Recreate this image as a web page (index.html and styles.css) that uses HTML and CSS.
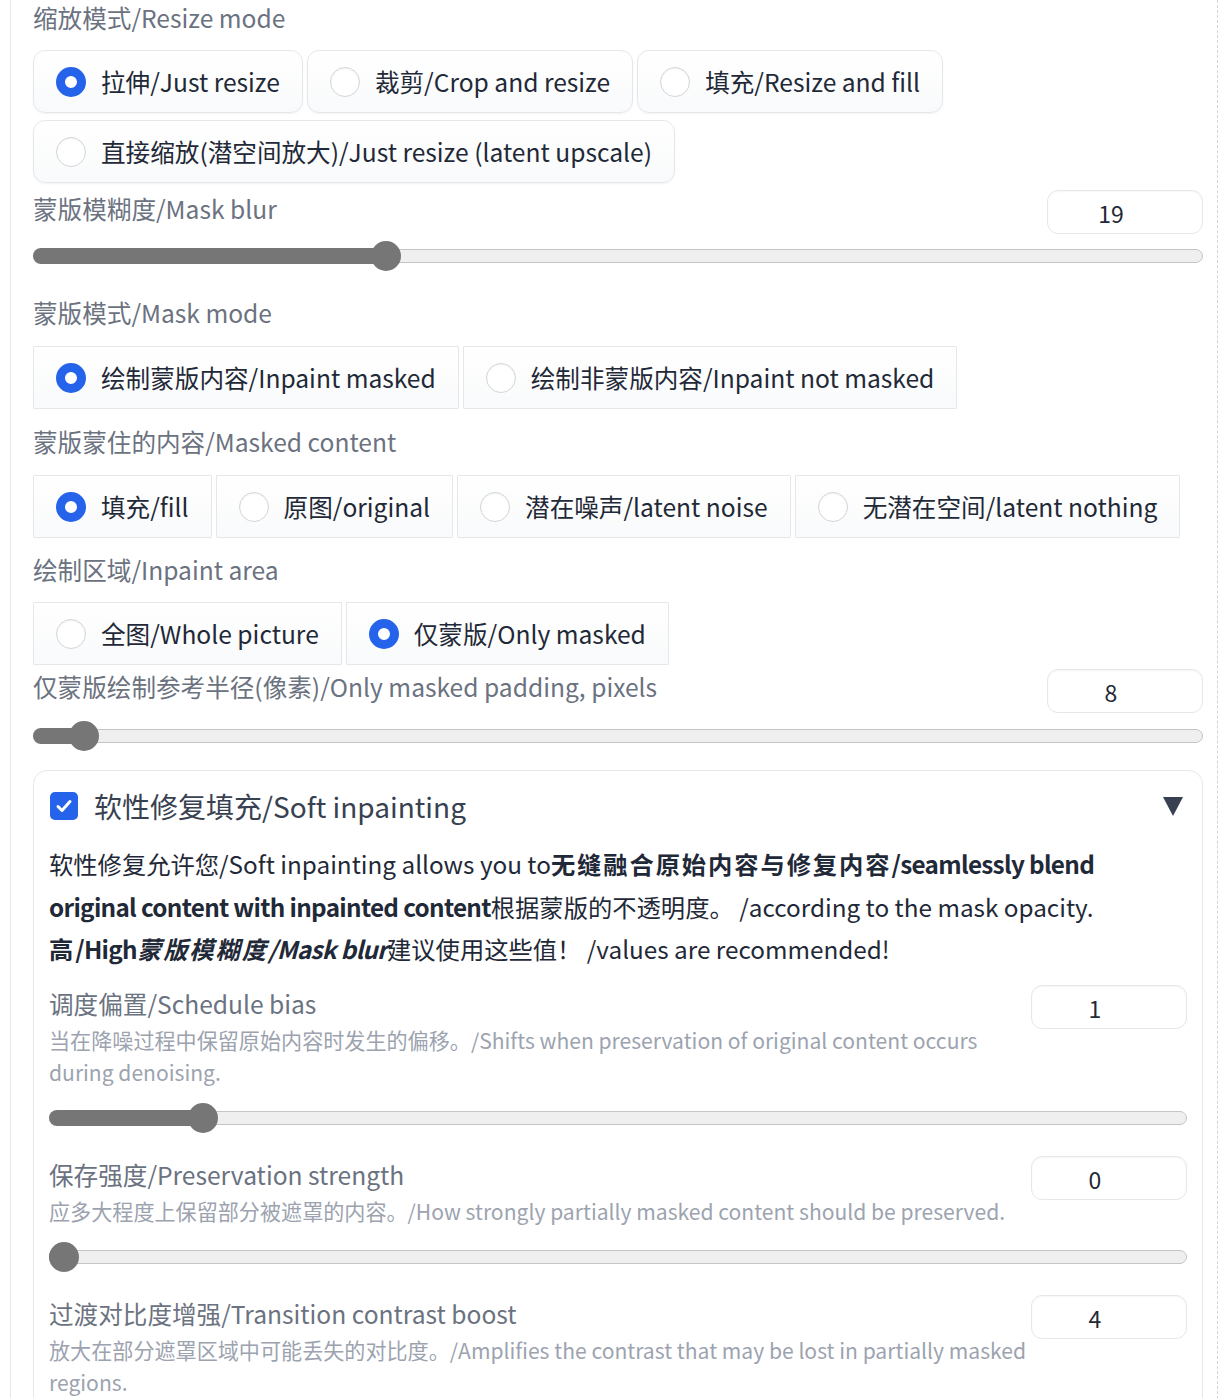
FILE: index.html
```html
<!DOCTYPE html>
<html lang="zh-CN">
<head>
<meta charset="utf-8">
<title>Inpaint settings</title>
<link rel="stylesheet" href="styles.css">
</head>
<body>
<div class="panel">

  <div class="field">
    <span class="label">缩放模式/Resize mode</span>
    <div class="radios rounded">
      <label class="radio"><span class="dot on"></span><span>拉伸/Just resize</span></label>
      <label class="radio"><span class="dot"></span><span>裁剪/Crop and resize</span></label>
      <label class="radio"><span class="dot"></span><span>填充/Resize and fill</span></label>
      <label class="radio"><span class="dot"></span><span>直接缩放(潜空间放大)/Just resize (latent upscale)</span></label>
    </div>
  </div>

  <div class="field f-blur">
    <div class="head">
      <span class="label">蒙版模糊度/Mask blur</span>
      <div class="num">19</div>
    </div>
    <div class="slider">
      <div class="track"><div class="fill" style="width: calc(15px + 0.296875 * (100% - 30px))"></div></div>
      <div class="thumb" style="left: calc(15px + 0.296875 * (100% - 30px))"></div>
    </div>
  </div>

  <div class="field f-mode">
    <span class="label">蒙版模式/Mask mode</span>
    <div class="radios square">
      <label class="radio"><span class="dot on"></span><span>绘制蒙版内容/Inpaint masked</span></label>
      <label class="radio"><span class="dot"></span><span>绘制非蒙版内容/Inpaint not masked</span></label>
    </div>
  </div>

  <div class="field f-content">
    <span class="label">蒙版蒙住的内容/Masked content</span>
    <div class="radios square">
      <label class="radio"><span class="dot on"></span><span>填充/fill</span></label>
      <label class="radio"><span class="dot"></span><span>原图/original</span></label>
      <label class="radio"><span class="dot"></span><span>潜在噪声/latent noise</span></label>
      <label class="radio"><span class="dot"></span><span>无潜在空间/latent nothing</span></label>
    </div>
  </div>

  <div class="field f-area">
    <span class="label">绘制区域/Inpaint area</span>
    <div class="radios square">
      <label class="radio"><span class="dot"></span><span>全图/Whole picture</span></label>
      <label class="radio"><span class="dot on"></span><span>仅蒙版/Only masked</span></label>
    </div>
  </div>

  <div class="field f-pad">
    <div class="head">
      <span class="label">仅蒙版绘制参考半径(像素)/Only masked padding, pixels</span>
      <div class="num">8</div>
    </div>
    <div class="slider">
      <div class="track"><div class="fill" style="width: calc(15px + 0.03125 * (100% - 30px))"></div></div>
      <div class="thumb" style="left: calc(15px + 0.03125 * (100% - 30px))"></div>
    </div>
  </div>

  <div class="soft">
    <div class="soft-title">
      <span class="check"><svg viewBox="0 0 28 28" width="28" height="28"><path d="M8 14.5l4 4 8-9" fill="none" stroke="#fff" stroke-width="3" stroke-linecap="round" stroke-linejoin="round"/></svg></span>
      <span class="title-text">软性修复填充/Soft inpainting</span>
      <svg class="caret" viewBox="0 0 20 20" width="20" height="20"><polygon points="0,1 20,1 10,20" fill="#374151"/></svg>
    </div>
    <p class="desc">软性修复允许您/Soft inpainting allows you to<b><span class="zh">无缝融合原始内容与修复内容</span>/seamlessly blend original content with inpainted content</b>根据蒙版的不透明度。 /according to the mask opacity.<br><b><span class="zh">高</span>/High<i><span class="zh">蒙版模糊度</span>/Mask blur</i></b>建议使用这些值！ /values are recommended!</p>

    <div class="sub s1">
      <div class="head">
        <div class="lab-col">
          <span class="label">调度偏置/Schedule bias</span>
          <span class="info">当在降噪过程中保留原始内容时发生的偏移。/Shifts when preservation of original content occurs during denoising.</span>
        </div>
        <div class="num">1</div>
      </div>
      <div class="slider">
        <div class="track"><div class="fill" style="width: calc(15px + 0.125 * (100% - 30px))"></div></div>
        <div class="thumb" style="left: calc(15px + 0.125 * (100% - 30px))"></div>
      </div>
    </div>

    <div class="sub">
      <div class="head">
        <div class="lab-col">
          <span class="label">保存强度/Preservation strength</span>
          <span class="info">应多大程度上保留部分被遮罩的内容。/How strongly partially masked content should be preserved.</span>
        </div>
        <div class="num">0</div>
      </div>
      <div class="slider">
        <div class="track"><div class="fill" style="width: 15px"></div></div>
        <div class="thumb" style="left: 15px"></div>
      </div>
    </div>

    <div class="sub">
      <div class="head">
        <div class="lab-col">
          <span class="label">过渡对比度增强/Transition contrast boost</span>
          <span class="info">放大在部分遮罩区域中可能丢失的对比度。/Amplifies the contrast that may be lost in partially masked regions.</span>
        </div>
        <div class="num">4</div>
      </div>
    </div>
  </div>

</div>
</body>
</html>
```

FILE: styles.css
```css
html, body {
  margin: 0;
  padding: 0;
  background: #ffffff;
}

body {
  font-family: "Noto Sans CJK SC", "Noto Sans", sans-serif;
  color: #1f2937;
  overflow: hidden;
}

.panel {
  margin-left: 10px;
  width: 1208px;
  min-height: 1398px;
  box-sizing: border-box;
  border-left: 1px solid #e5e7eb;
  border-right: 1px dashed #d4d4d8;
  padding: 0 14px 0 22px;
  display: flex;
  flex-direction: column;
}

.field {
  display: flex;
  flex-direction: column;
}

.label {
  display: block;
  font-size: 24.6px;
  line-height: 34px;
  color: #6b7280;
  white-space: nowrap;
}

.radios {
  display: flex;
  flex-wrap: wrap;
  gap: 7px 4px;
  margin-top: 16px;
}

.radio {
  display: flex;
  align-items: center;
  gap: 15px;
  box-sizing: border-box;
  height: 63px;
  padding: 0 22px;
  border: 1px solid #e5e7eb;
  background: linear-gradient(180deg, #ffffff 0%, #f9fafb 100%);
  font-size: 24.6px;
  line-height: 35px;
  color: #1f2937;
  white-space: nowrap;
}

.rounded .radio {
  border-radius: 12px;
  box-shadow: 0 1px 2px rgba(0, 0, 0, 0.05);
}

.square .radio {
  border-radius: 1px;
}

.dot {
  flex: none;
  width: 30px;
  height: 30px;
  border-radius: 50%;
  box-sizing: border-box;
  border: 1px solid #d1d5db;
  background: #ffffff;
  box-shadow: inset 0 1px 2px rgba(0, 0, 0, 0.05);
}

.dot.on {
  border: 9px solid #2563eb;
  background: #ffffff;
  box-shadow: none;
}

.head {
  display: flex;
  justify-content: space-between;
  align-items: flex-start;
}

.head .label {
  margin-top: 1px;
}

.num {
  flex: none;
  width: 156px;
  height: 44px;
  box-sizing: border-box;
  padding-right: 28px;
  border: 1px solid #e5e7eb;
  border-radius: 11px;
  background: #ffffff;
  box-shadow: inset 0 1px 2px rgba(0, 0, 0, 0.04);
  font-size: 23px;
  line-height: 44px;
  text-align: center;
  color: #1f2937;
}

.slider {
  position: relative;
  height: 30px;
  display: flex;
  align-items: center;
  margin-top: 7px;
}

.track {
  flex: 1;
  position: relative;
  height: 14px;
  box-sizing: border-box;
  border: 1px solid #c5c5c5;
  border-radius: 7px;
  background: #efefef;
}

.fill {
  position: absolute;
  left: -1px;
  top: -2px;
  height: 16px;
  border-radius: 8px;
  background: #767676;
}

.thumb {
  position: absolute;
  top: 0;
  width: 30px;
  height: 30px;
  margin-left: -15px;
  border-radius: 50%;
  background: #767676;
}

.f-blur { margin-top: 7px; }
.f-mode { margin-top: 24px; }
.f-mode .radios { margin-top: 17px; }
.f-content { margin-top: 15px; }
.f-content .radios { margin-top: 17px; }
.f-area { margin-top: 14px; }
.f-area .radios { margin-top: 16px; }
.f-pad { margin-top: 4px; }
.f-pad .head .label { margin-top: 0; }
.f-pad .slider { margin-top: 8px; }

.soft {
  margin-top: 19px;
  border: 1px solid #e5e7eb;
  border-radius: 14px;
  padding: 16px 15px 40px 15px;
}

.soft-title {
  display: flex;
  align-items: center;
  height: 38px;
}

.check {
  flex: none;
  width: 28px;
  height: 28px;
  border-radius: 5px;
  background: #2563eb;
  margin-left: 1px;
  display: flex;
}

.title-text {
  margin-left: 16px;
  font-size: 28px;
  line-height: 38px;
  color: #374151;
}

.caret {
  margin-left: auto;
  margin-right: 4px;
}

.desc {
  margin: 18px 0 0 0;
  padding-right: 40px;
  font-size: 24.3px;
  line-height: 42.5px;
  color: #1f2937;
}

.desc b {
  font-weight: 700;
  letter-spacing: -0.7px;
}

.desc b .zh {
  letter-spacing: 1.9px;
}

.sub {
  margin-top: 23px;
}

.sub.s1 {
  margin-top: 14px;
}

.lab-col {
  flex: 1;
  min-width: 0;
}

.info {
  display: block;
  margin-top: 4px;
  font-size: 21.1px;
  line-height: 32px;
  color: #9ca3af;
}

.sub .slider {
  margin-top: 15px;
}
```
